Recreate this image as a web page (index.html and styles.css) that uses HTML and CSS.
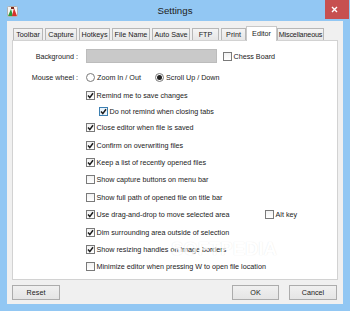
FILE: index.html
```html
<!DOCTYPE html>
<html>
<head>
<meta charset="utf-8">
<link rel="stylesheet" href="styles.css">
</head>
<body>
<div class="window">
  <div class="titlebar">
    <div class="tb-left">
      <svg class="app-icon" width="11" height="11" viewBox="0 0 11 11">
        <rect x="0.5" y="0.5" width="10" height="10" rx="1" fill="#f4f4f4" stroke="#b0b0b0"/>
        <polygon points="1,10 4,3 6,10" fill="#2e9a3a"/>
        <polygon points="5,10 7,2 10,10" fill="#d8302a"/>
        <rect x="4" y="1" width="3" height="2" fill="#7a2a1a"/>
      </svg>
    </div>
    <div class="title">Settings</div>
    <div class="tb-right">
      <div class="close">
        <svg width="7" height="7" viewBox="0 0 7 7"><path d="M1 1L6 6M6 1L1 6" stroke="#fff" stroke-width="1.4"/></svg>
      </div>
    </div>
  </div>
  <div class="client">
    <div class="tabs">
      <div class="tab w-toolbar">Toolbar</div>
      <div class="tab w-capture">Capture</div>
      <div class="tab w-hotkeys">Hotkeys</div>
      <div class="tab w-filename">File Name</div>
      <div class="tab w-autosave">Auto Save</div>
      <div class="tab w-ftp">FTP</div>
      <div class="tab w-print">Print</div>
      <div class="tab sel w-editor">Editor</div>
      <div class="tab w-misc">Miscellaneous</div>
    </div>
    <div class="panel">
      <div class="top-grid">
        <div class="lbl">Background :</div>
        <div class="bg-row">
          <div class="bg-field"></div>
          <div class="chk chess"><span class="box"></span>Chess Board</div>
        </div>
        <div class="lbl">Mouse wheel :</div>
        <div class="radio-row">
          <div class="opt opt-zoom"><span class="radio"></span>Zoom In / Out</div>
          <div class="opt"><span class="radio on"></span>Scroll Up / Down</div>
        </div>
      </div>
      <div class="list">
        <div class="item tight"><span class="box"><svg viewBox="0 0 7 7"><path d="M1 3.6L2.8 5.6L6 1.2"/></svg></span>Remind me to save changes</div>
        <div class="item tight sub"><span class="box focus"><svg viewBox="0 0 7 7"><path d="M1 3.6L2.8 5.6L6 1.2"/></svg></span>Do not remind when closing tabs</div>
        <div class="item"><span class="box"><svg viewBox="0 0 7 7"><path d="M1 3.6L2.8 5.6L6 1.2"/></svg></span>Close editor when file is saved</div>
        <div class="item"><span class="box"><svg viewBox="0 0 7 7"><path d="M1 3.6L2.8 5.6L6 1.2"/></svg></span>Confirm on overwriting files</div>
        <div class="item"><span class="box"><svg viewBox="0 0 7 7"><path d="M1 3.6L2.8 5.6L6 1.2"/></svg></span>Keep a list of recently opened files</div>
        <div class="item"><span class="box"></span>Show capture buttons on menu bar</div>
        <div class="item"><span class="box"></span>Show full path of opened file on title bar</div>
        <div class="item"><span class="main"><span class="box"><svg viewBox="0 0 7 7"><path d="M1 3.6L2.8 5.6L6 1.2"/></svg></span>Use drag-and-drop to move selected area</span><span class="box"></span>Alt key</div>
        <div class="item"><span class="box"><svg viewBox="0 0 7 7"><path d="M1 3.6L2.8 5.6L6 1.2"/></svg></span>Dim surrounding area outside of selection</div>
        <div class="item"><span class="box"><svg viewBox="0 0 7 7"><path d="M1 3.6L2.8 5.6L6 1.2"/></svg></span>Show resizing handles on image borders</div>
        <div class="item"><span class="box"></span>Minimize editor when pressing W to open file location</div>
      </div>
      <div class="watermark">SOFTPEDIA</div>
    </div>
    <div class="buttons">
      <div class="btn">Reset</div>
      <div class="spacer"></div>
      <div class="btn btn-ok">OK</div>
      <div class="btn btn-cancel">Cancel</div>
    </div>
  </div>
</div>
</body>
</html>
```
FILE: styles.css
```css
body {
  margin: 0;
  font-family: "Liberation Sans", Arial, sans-serif;
  color: #1a1a1a;
}
.window {
  width: 350px;
  height: 311px;
  background: #92c7f3;
  display: flex;
  flex-direction: column;
}
.titlebar {
  height: 21px;
  flex: none;
  display: grid;
  grid-template-columns: 1fr auto 1fr;
}
.app-icon {
  display: block;
  margin: 6px 0 0 7px;
}
.title {
  font-size: 9.7px;
  line-height: 22px;
  color: #222;
}
.tb-right {
  display: flex;
  justify-content: flex-end;
}
.close {
  width: 24px;
  height: 19px;
  margin-right: 1px;
  background: #c75050;
  display: flex;
  align-items: center;
  justify-content: center;
  padding-right: 6px;
  box-sizing: border-box;
}
.close svg { display: block; }
.client {
  margin: 0 7px;
  height: 283px;
  background: #f0f0f0;
  padding: 5px 5px 0;
  box-sizing: border-box;
  display: flex;
  flex-direction: column;
}
.tabs {
  display: flex;
  align-items: flex-end;
  height: 14px;
  padding-left: 1px;
  position: relative;
  z-index: 1;
}
.tab {
  height: 12px;
  box-sizing: border-box;
  border: 1px solid #b7b7b7;
  border-bottom: none;
  background: linear-gradient(#f4f4f4, #e6e6e6);
  font-size: 7.2px;
  line-height: 11px;
  text-align: center;
  white-space: nowrap;
  margin-right: 2px;
}
.tab.sel {
  height: 15px;
  margin-bottom: -1px;
  background: #fff;
  border-color: #c8c8c8;
  line-height: 13px;
}
.w-toolbar { width: 30px; }
.w-capture { width: 32px; }
.w-hotkeys { width: 31px; }
.w-filename { width: 38px; }
.w-autosave { width: 38px; }
.w-ftp { width: 27px; }
.w-print { width: 25px; margin-right: 0; }
.w-editor { width: 31px; margin-right: 0; }
.w-misc { width: 47px; letter-spacing: -0.15px; }
.panel {
  height: 240px;
  flex: none;
  box-sizing: border-box;
  border: 1px solid #d2d2d2;
  background: #fff;
  position: relative;
  padding-top: 8px;
}
.top-grid {
  display: grid;
  grid-template-columns: 65px auto;
  column-gap: 8px;
  row-gap: 7px;
  grid-auto-rows: 14px;
  align-items: center;
  font-size: 7.2px;
}
.lbl { text-align: right; white-space: nowrap; }
.bg-row, .radio-row { display: flex; align-items: center; }
.bg-field {
  width: 131px;
  height: 14px;
  box-sizing: border-box;
  background: #c9c9c9;
  border: 1px solid #bcbcbc;
}
.chk { display: flex; align-items: center; }
.chess { margin-left: 6px; }
.opt { display: flex; align-items: center; white-space: nowrap; }
.opt-zoom { width: 69px; }
.radio {
  width: 9px;
  height: 9px;
  box-sizing: border-box;
  border: 1px solid #7a7a7a;
  border-radius: 50%;
  background: #fff;
  margin-right: 2px;
  display: flex;
  align-items: center;
  justify-content: center;
}
.radio.on::after {
  content: "";
  width: 5px;
  height: 5px;
  border-radius: 50%;
  background: #222;
}
.box {
  width: 9px;
  height: 9px;
  flex: none;
  box-sizing: border-box;
  border: 1px solid #7a7a7a;
  background: linear-gradient(#f2f2f2, #fff);
  margin-right: 1.5px;
  display: flex;
  align-items: center;
  justify-content: center;
}
.box.focus { border-color: #3c7fb1; background: #eaf4fc; }
.box svg { width: 7px; height: 7px; display: block; }
.box path { fill: none; stroke: #1c1c1c; stroke-width: 1.5; }
.list {
  margin-top: 3px;
  padding-left: 73px;
  font-size: 7.2px;
}
.item {
  display: flex;
  align-items: center;
  height: 17.4px;
  white-space: nowrap;
}
.item.tight { height: 16px; }
.item.sub { padding-left: 13px; }
.main { display: flex; align-items: center; width: 179px; }
.watermark {
  position: absolute;
  left: 158px;
  top: 197px;
  font-size: 18.5px;
  font-weight: bold;
  color: #fff;
  text-shadow: 0 0 1px rgba(0,0,0,0.15);
  opacity: 0.7;
  pointer-events: none;
}
.buttons {
  display: flex;
  margin-top: 5px;
}
.btn {
  width: 48px;
  height: 15px;
  box-sizing: border-box;
  border: 1px solid #acacac;
  background: linear-gradient(#f0f0f0, #e5e5e5);
  font-size: 7.2px;
  line-height: 13px;
  text-align: center;
}
.spacer { flex: 1; }
.btn-ok { width: 47px; }
.btn-cancel { margin-left: 10px; margin-right: 1px; }
```
